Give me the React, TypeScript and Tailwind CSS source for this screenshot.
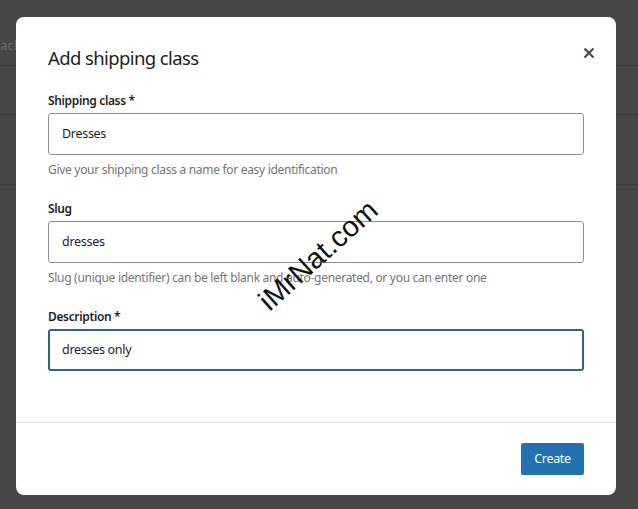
import React from "react";

const font = { fontFamily: '"Noto Sans", "Open Sans", sans-serif' };

function Field({
  label,
  value,
  help,
  focused,
}: {
  label: string;
  value: string;
  help?: string;
  focused?: boolean;
}) {
  return (
    <div className="flex flex-col">
      <label className="text-[12px] leading-[16px] font-semibold tracking-[-0.35px] text-[#1e1e1e]">{label}</label>
      <div
        className={
          focused
            ? "mt-[4px] h-[42px] rounded-[3px] border-2 border-[#2c6586] px-[12px] flex items-center text-[12.5px] tracking-[-0.3px] text-[#1e1e1e]"
            : "mt-[4px] h-[42px] rounded-[3px] border border-[#8f8f8f] pl-[13px] flex items-center text-[12.5px] tracking-[-0.3px] text-[#1e1e1e]"
        }
      >
        {value}
      </div>
      {help && (
        <p className="mt-[7px] text-[12px] leading-[16px] tracking-[-0.3px] text-[#757575]">{help}</p>
      )}
    </div>
  );
}

export default function App() {
  return (
    <div className="relative w-[638px] h-[509px] overflow-hidden bg-[#474747]" style={font}>
      {/* dimmed page behind */}
      <div className="flex flex-col">
        <div className="h-[66px] flex items-end pb-[12px] border-b border-[#3b3b3b]">
          <span className="-ml-[7px] text-[13px] leading-[16px] text-[#6a6a6a]">Each</span>
        </div>
        <div className="h-[49px] border-b border-[#3b3b3b]" />
        <div className="h-[70px] border-b border-[#3b3b3b]" />
        <div className="h-[5px] border-b border-[#3b3b3b]" />
      </div>

      {/* modal */}
      <div className="absolute left-[16px] top-[17px] w-[600px] h-[478px] bg-white rounded-[8px] flex flex-col">
        <div className="flex items-start justify-between pl-[32px] pr-[20px] pt-[27px]">
          <h1 className="text-[18.5px] leading-[28px] tracking-[-0.6px] text-[#1e1e1e]">Add shipping class</h1>
          <button className="w-[14px] h-[14px] mt-[2px] flex items-center justify-center text-[#4a4a4a]">
            <svg width="12" height="12" viewBox="0 0 12 12">
              <path d="M1.5 1.5 L10.5 10.5 M10.5 1.5 L1.5 10.5" stroke="currentColor" strokeWidth="2.2" />
            </svg>
          </button>
        </div>
        <div className="flex flex-col gap-[23px] px-[32px] pt-[21px] flex-1">
          <Field
            label="Shipping class *"
            value="Dresses"
            help="Give your shipping class a name for easy identification"
          />
          <Field
            label="Slug"
            value="dresses"
            help="Slug (unique identifier) can be left blank and auto-generated, or you can enter one"
          />
          <Field label="Description *" value="dresses only" focused />
        </div>
        <div className="border-t border-[#e0e0e0] flex justify-end px-[32px] pt-[20px] pb-[20px]">
          <button className="h-[32px] w-[63px] rounded-[2px] bg-[#2271b1] text-white text-[12.5px] tracking-[-0.3px]">
            Create
          </button>
        </div>
      </div>

      {/* watermark */}
      <div
        className="absolute left-[228px] top-[239px] w-[180px] text-center -rotate-[42deg] text-[29px] leading-[32px] text-[#111]"
        style={{ fontFamily: '"Liberation Sans", sans-serif' }}
      >
        iMrNat.com
      </div>
    </div>
  );
}
